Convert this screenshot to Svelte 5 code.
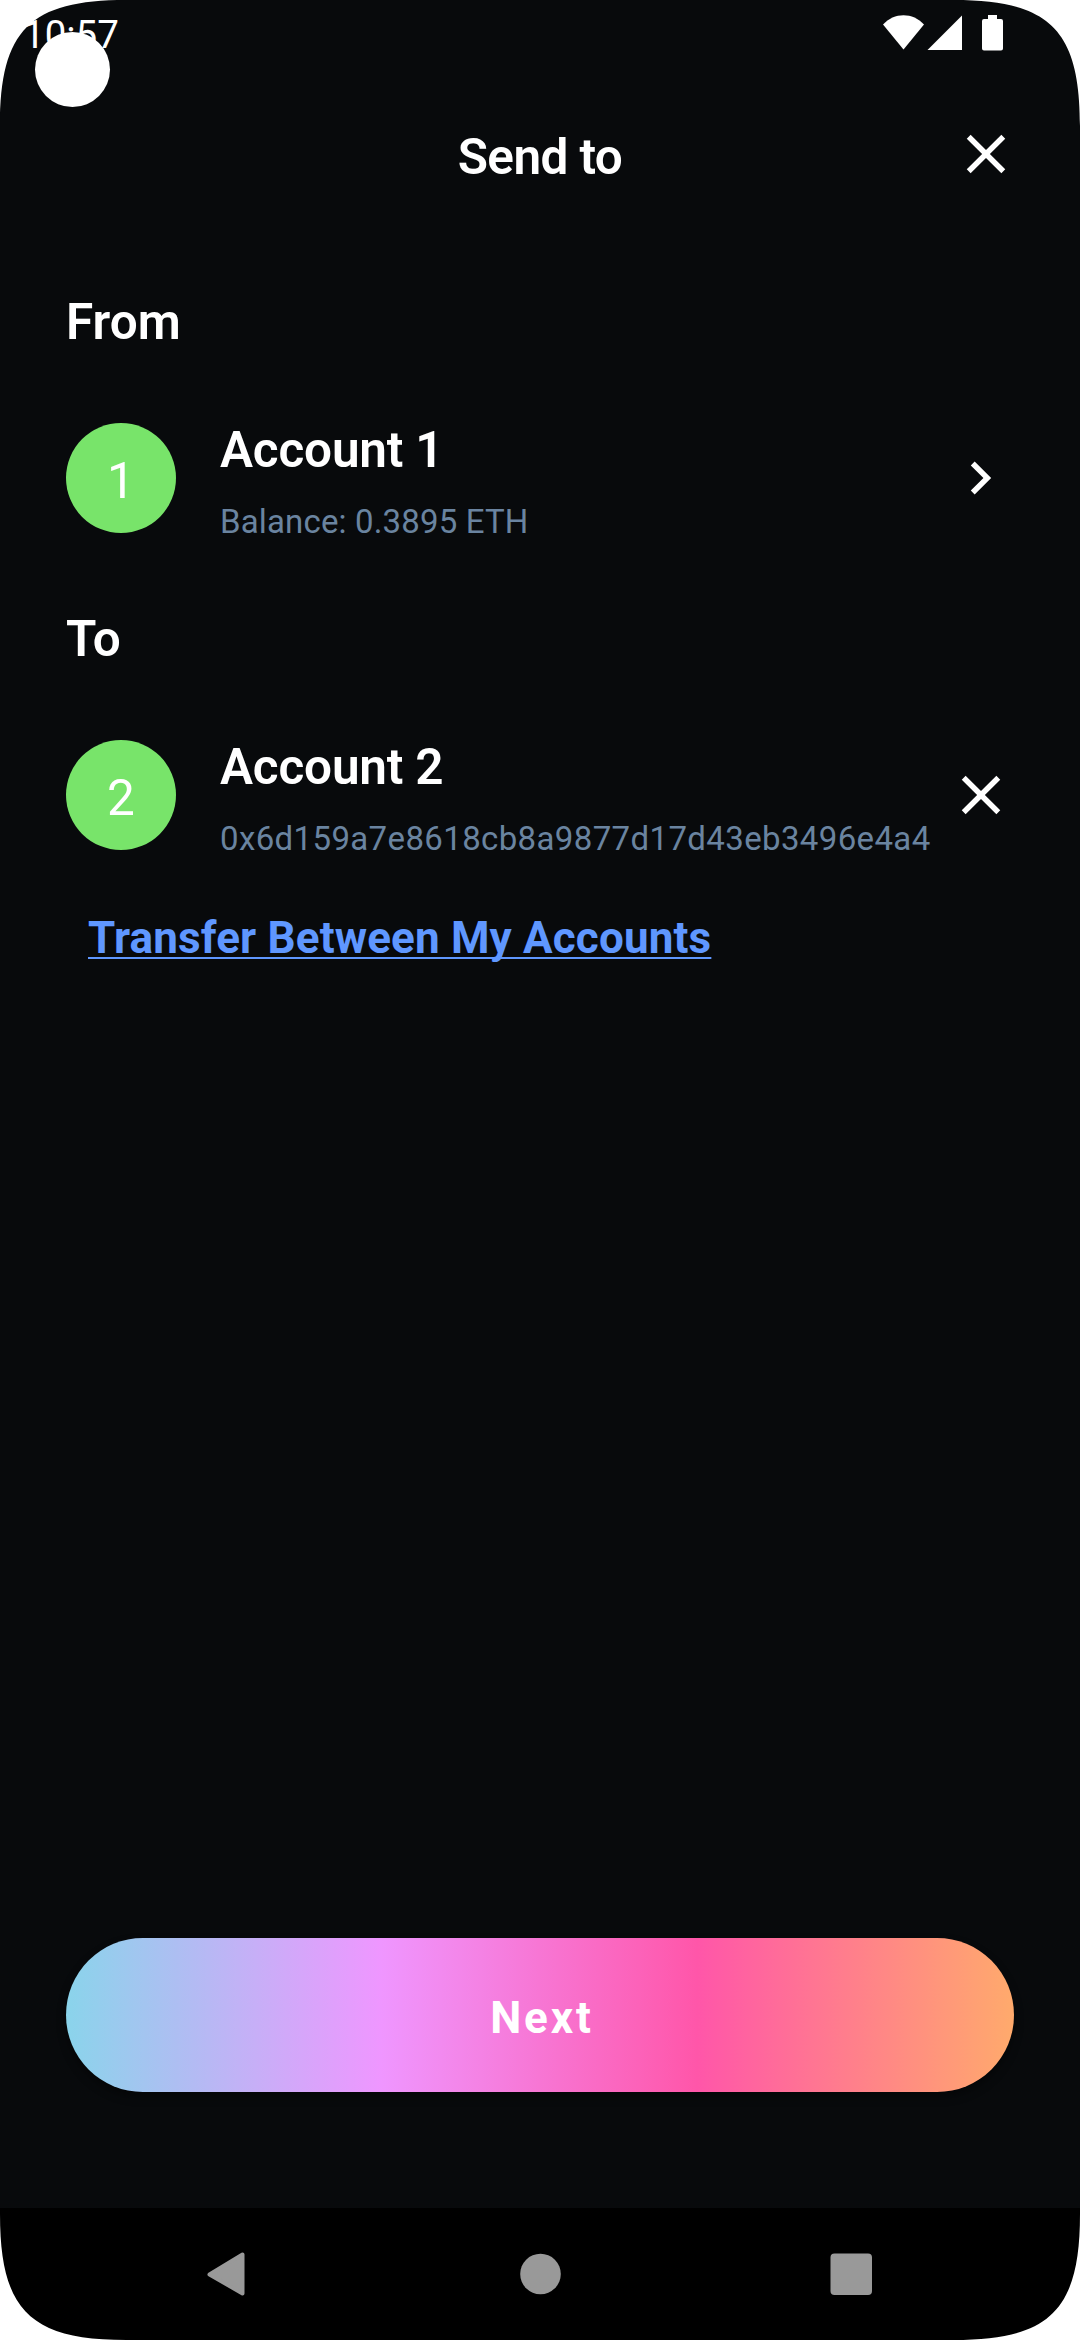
<script>
  const close =
    'M19 6.41 17.59 5 12 10.59 6.41 5 5 6.41 10.59 12 5 17.59 6.41 19 12 13.41 17.59 19 19 17.59 13.41 12z';
  const chevron = 'M8.29 16.59 12.88 12 8.29 7.41 9.7 6l6 6-6 6z';

  const sections = [
    { heading: 'From', badge: '1', name: 'Account 1', detail: 'Balance: 0.3895 ETH', kind: 'balance', icon: chevron, action: 'Choose account' },
    { heading: 'To', badge: '2', name: 'Account 2', detail: '0x6d159a7e8618cb8a9877d17d43eb3496e4a4', kind: 'address', icon: close, action: 'Clear recipient' },
  ];
  const corner = 'M0 0H126C30 0 0 30 0 126Z';
</script>

<div class="screen">
  <div class="status">
    <span class="time">10:57</span>
    <svg class="signals" width="122" height="38" viewBox="0 0 122 38" fill="#fff">
      <path d="M0 9.5C11-3 30-3 41 9.5L20.5 34.5Z" />
      <path d="M44.5 35 79 .5V35Z" />
      <path d="M105 0h9v4h4a2 2 0 0 1 2 2v27.500a2 2 0 0 1-2 2h-17a2 2 0 0 1-2-2V6a2 2 0 0 1 2-2h4z" />
    </svg>
  </div>

  <header>
    <h1>Send to</h1>
    <button class="icon" aria-label="Close">
      <svg width="66" height="66" viewBox="0 0 24 24" fill="#fff"><path d={close} /></svg>
    </button>
  </header>

  <main>
    {#each sections as s}
      <section>
        <h2>{s.heading}</h2>
        <div class="account">
          <span class="avatar">{s.badge}</span>
          <div class="info">
            <span class="name">{s.name}</span>
            <span class="detail {s.kind}">{s.detail}</span>
          </div>
          <button class="icon" aria-label={s.action}>
            <svg width="66" height="66" viewBox="0 0 24 24" fill="#fff"><path d={s.icon} /></svg>
          </button>
        </div>
      </section>
    {/each}
    <button class="link">Transfer Between My Accounts</button>
    <button class="next">Next</button>
  </main>

  <nav>
    <svg width="46" height="46" viewBox="0 0 46 46"><path d="M6.500 23.500 39.500 3.500V42.500Z" /></svg>
    <svg width="46" height="46" viewBox="0 0 46 46"><circle cx="24.500" cy="23" r="20.300" /></svg>
    <svg width="46" height="46" viewBox="0 0 46 46"><rect x="2.500" y="2.500" width="41.500" height="41.500" rx="4" /></svg>
  </nav>

  <span class="touch"></span>
  <svg class="corner tl" viewBox="0 0 126 126"><path d={corner} /></svg>
  <svg class="corner tr" viewBox="0 0 126 126"><path d={corner} /></svg>
  <svg class="corner bl" viewBox="0 0 126 126"><path d={corner} /></svg>
  <svg class="corner br" viewBox="0 0 126 126"><path d={corner} /></svg>
</div>

<style>
  :global(body) { margin: 0; background: #fff; }
  .screen {
    position: relative;
    width: 1080px;
    height: 2340px;
    overflow: hidden;
    display: flex;
    flex-direction: column;
    background: #080a0c;
    color: #fff;
    font-family: Roboto, sans-serif;
  }
  button {
    padding: 0;
    border: 0;
    background: none;
    color: inherit;
    font-family: inherit;
    cursor: pointer;
  }
  h1, h2 { margin: 0; font-size: 49.5px; font-weight: 600; line-height: 66px; }
  svg { display: block; }
  .status {
    height: 66px;
    display: flex;
    justify-content: space-between;
    padding: 0 75px 0 23px;
    box-sizing: border-box;
  }
  .time { font-size: 38.5px; line-height: 70px; }
  .signals { margin-top: 15px; }
  header {
    height: 176px;
    display: grid;
    grid-template-columns: 66px 1fr 66px;
    align-items: center;
    padding: 0 61px;
  }
  h1 { grid-column: 2; text-align: center; padding-top: 6px; letter-spacing: -0.6px; }
  main {
    flex: 1;
    display: flex;
    flex-direction: column;
    align-items: stretch;
    padding: 47px 66px 116px;
  }
  section { margin-bottom: 73px; }
  section:nth-of-type(2) { margin-bottom: 58px; }
  .account { display: flex; height: 110px; margin-top: 68px; }
  .avatar {
    width: 110px;
    height: 110px;
    border-radius: 50%;
    background: #78e46a;
    font-size: 49.5px;
    line-height: 116px;
    text-align: center;
  }
  .info {
    flex: 1;
    min-width: 0;
    margin-left: 44px;
    display: flex;
    flex-direction: column;
    gap: 25px;
    white-space: nowrap;
  }
  .name { font-size: 49.5px; font-weight: 600; line-height: 54px; letter-spacing: -0.2px; }
  .detail { font-size: 33px; line-height: 40px; color: #6a84a0; }
  .balance { letter-spacing: 0.15px; }
  .address { letter-spacing: 0.37px; }
  .icon { flex: none; align-self: center; width: 66px; height: 66px; }
  .link {
    align-self: flex-start;
    margin-left: 22px;
    color: #5f97ff;
    font-size: 44px;
    font-weight: 700;
    line-height: 60px;
    letter-spacing: 0.16px;
    text-decoration: underline;
    text-decoration-thickness: 2px;
    text-decoration-skip-ink: none;
    text-underline-offset: 4px;
  }
  .next {
    height: 154px;
    margin-top: auto;
    padding-left: 4px;
    border-radius: 77px;
    background: linear-gradient(90deg, #8ad4eb, #ef96ff 33.3%, #ff56a9 66.6%, #ffaa6c);
    box-shadow: 0 5px 10px rgb(0 0 0 / 0.4);
    font-size: 44px;
    font-weight: 700;
    line-height: 160px;
    letter-spacing: 2.9px;
  }
  nav {
    height: 132px;
    display: flex;
    justify-content: space-between;
    align-items: center;
    padding: 0 206px 0 203px;
    background: #000;
    fill: #999;
  }
  nav path { stroke: #999; stroke-width: 4px; stroke-linejoin: round; }
  .touch {
    position: absolute;
    left: 35px;
    top: 32px;
    width: 75px;
    height: 75px;
    border-radius: 50%;
    background: #fff;
  }
  .corner { position: absolute; width: 126px; height: 126px; fill: #fff; }
  .tl { top: 0; left: 0; }
  .tr { top: 0; right: 0; transform: scaleX(-1); }
  .bl { bottom: 0; left: 0; transform: scaleY(-1); }
  .br { bottom: 0; right: 0; transform: scale(-1); }
</style>
